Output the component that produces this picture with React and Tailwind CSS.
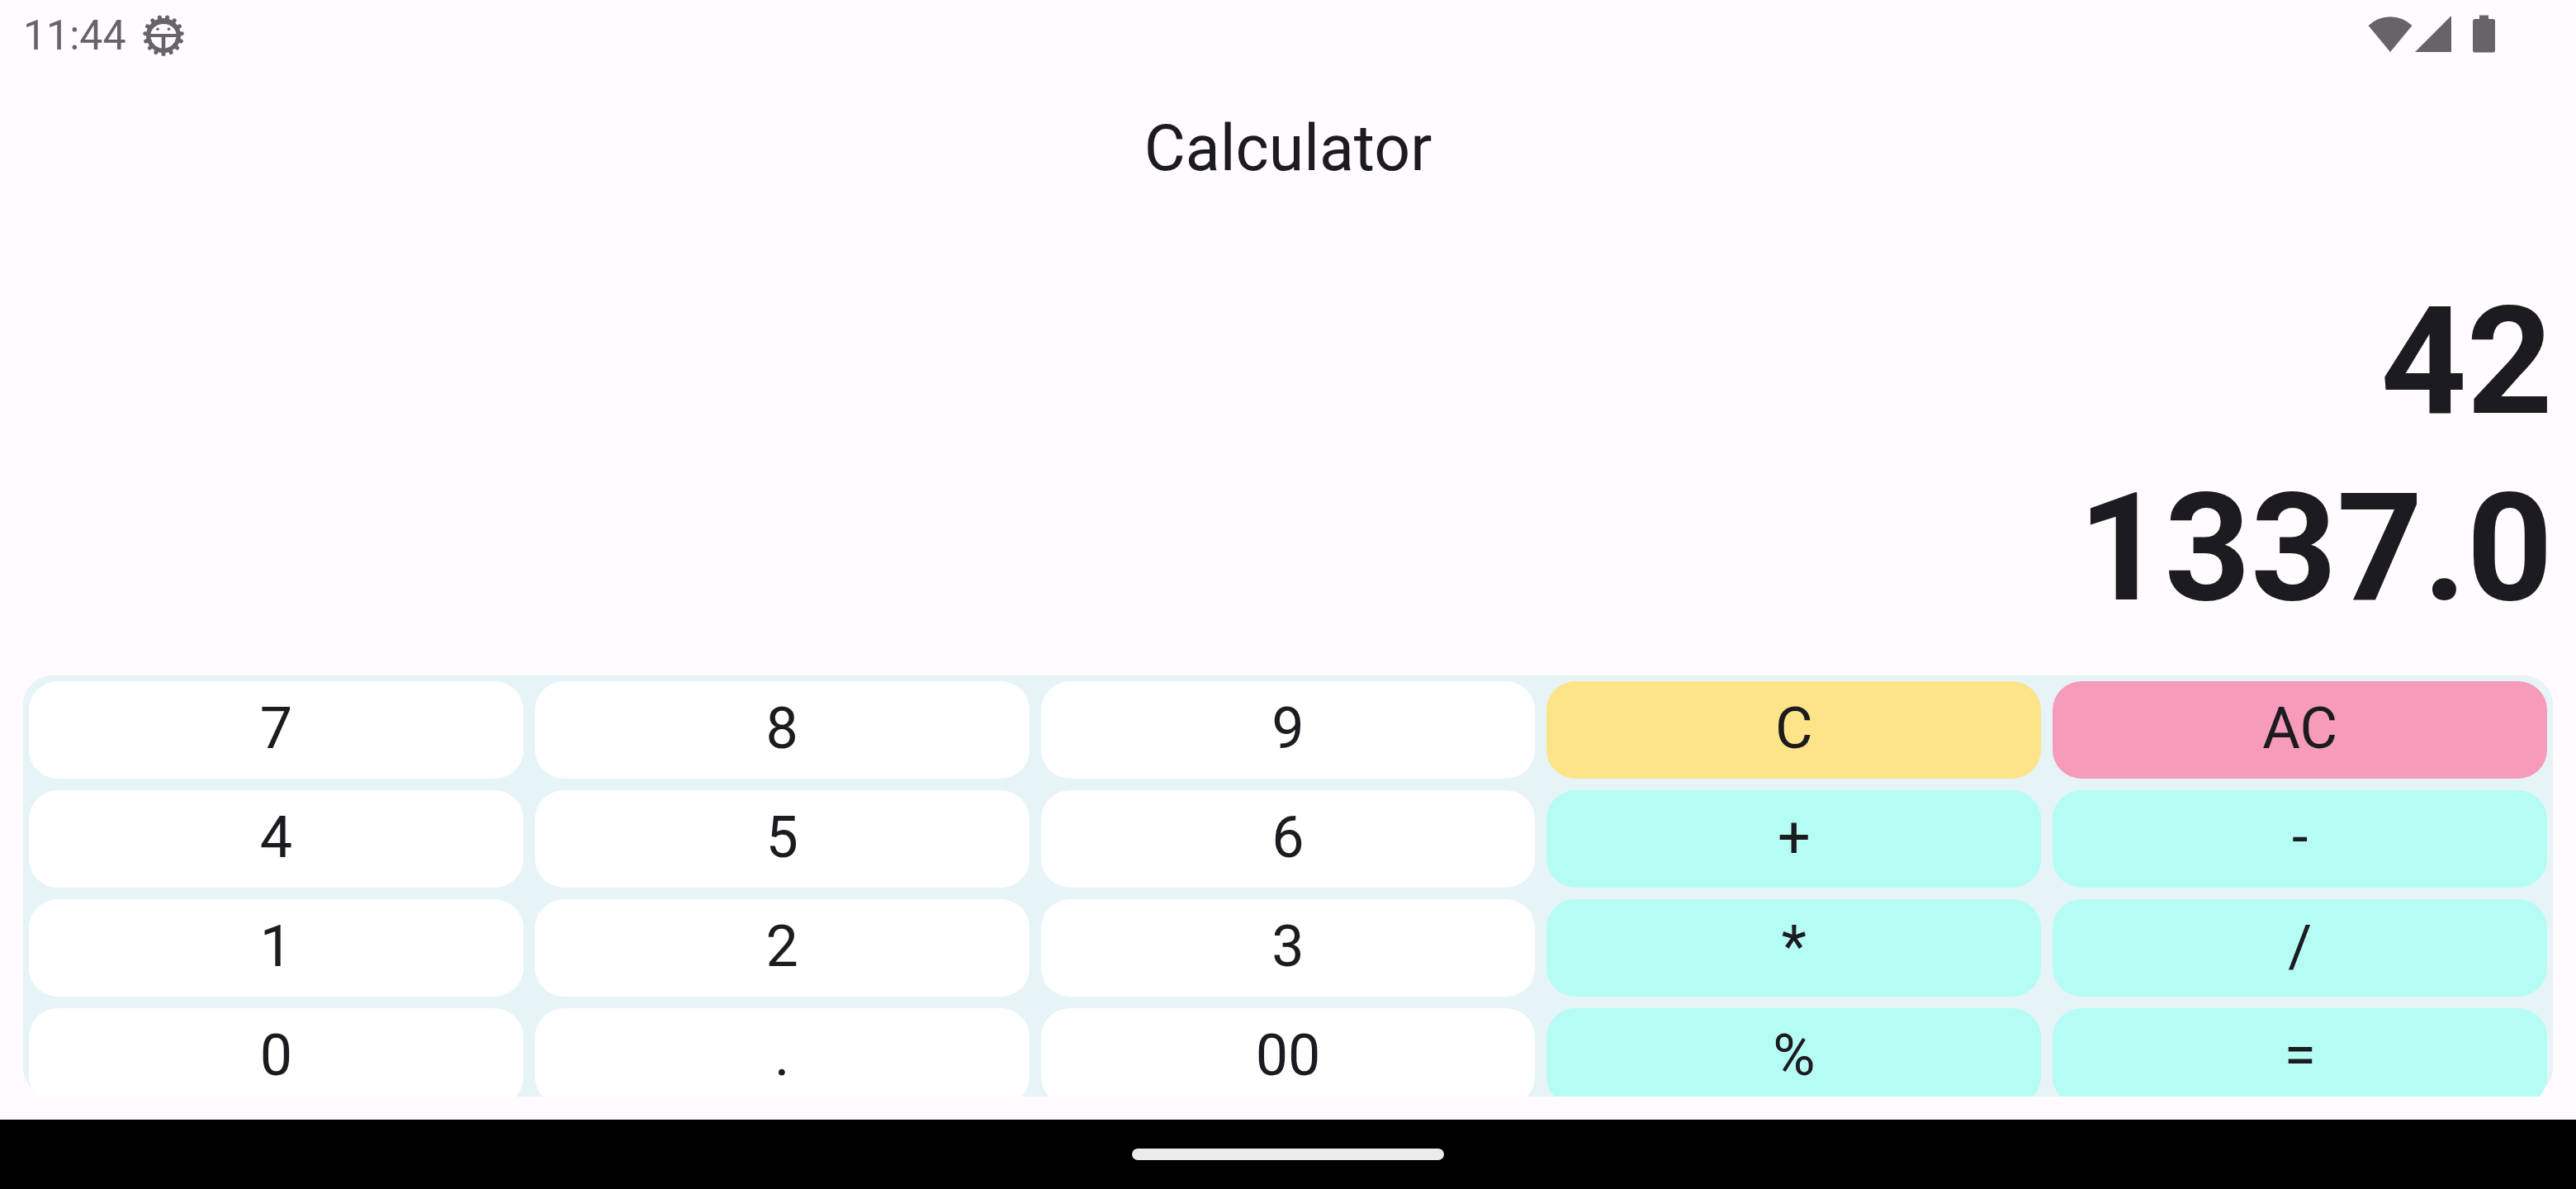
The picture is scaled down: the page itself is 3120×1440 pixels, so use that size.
const KEYS = [
  ["7", "8", "9", "C", "AC"],
  ["4", "5", "6", "+", "-"],
  ["1", "2", "3", "*", "/"],
  ["0", ".", "00", "%", "="],
];

function keyColor(label) {
  if (label === "C") return "bg-[#fde488]";
  if (label === "AC") return "bg-[#f69bba]";
  if (/^[0-9.]+$/.test(label)) return "bg-white";
  return "bg-[#b5fcf4]";
}

const TEETH = Array.from({ length: 15 }, (_, i) => Math.PI / 2 + (i * 2 * Math.PI) / 15);

function DebugIcon() {
  return (
    <svg viewBox="0 0 50 50" className="size-[50px]" fill="currentColor" aria-hidden="true">
      <path
        fillRule="evenodd"
        d="M25 4a21 21 0 1 0 0 42a21 21 0 1 0 0-42zM9.500 23a15.600 13.500 0 0 1 31 0zM9.500 27H22.700V40.500A15.600 15.600 0 0 1 9.500 27zM27.300 27H40.500A15.600 15.600 0 0 1 27.300 40.500z"
      />
      {TEETH.map((a) => (
        <line
          key={a}
          x1={25 + 18 * Math.cos(a)}
          y1={25 + 18 * Math.sin(a)}
          x2={25 + 22.4 * Math.cos(a)}
          y2={25 + 22.4 * Math.sin(a)}
          stroke="currentColor"
          strokeWidth="5"
          strokeLinecap="round"
        />
      ))}
      <circle cx="18" cy="17.300" r="1.800" />
      <circle cx="31.500" cy="17.300" r="1.800" />
    </svg>
  );
}

function StatusBar() {
  return (
    <div className="flex h-[86px] items-center justify-between pl-7 pr-[97px] text-[#666466]">
      <div className="flex items-center gap-5">
        <span className="text-[50px] leading-[58px]">11:44</span>
        <DebugIcon />
      </div>
      <div className="flex items-center pb-1">
        <svg viewBox="0 0 54 46" className="h-[46px] w-[54px]" fill="currentColor" aria-hidden="true">
          <path d="M27 45L.5 13A38 38 0 0 1 53.500 13z" />
        </svg>
        <svg viewBox="0 0 46 46" className="ml-[3px] h-[46px] w-[46px]" fill="currentColor" aria-hidden="true">
          <path d="M0 45L44 1V45z" />
        </svg>
        <svg viewBox="0 0 28 46" className="ml-6 h-[46px] w-7" fill="currentColor" aria-hidden="true">
          <path d="M8 0.500H19V5H24.500A2.500 2.500 0 0 1 27 7.500V43A2.500 2.500 0 0 1 24.500 45.500H2.500A2.500 2.500 0 0 1 0 43V7.500A2.500 2.500 0 0 1 2.500 5H8z" />
        </svg>
      </div>
    </div>
  );
}

export default function App() {
  return (
    <div className="flex min-h-screen flex-col bg-[#fffbff] font-[Roboto,sans-serif] text-[#1c1b1f]">
      <StatusBar />
      <header className="flex h-[188px] items-center justify-center">
        <h1 className="text-[77px] leading-[98px]">Calculator</h1>
      </header>
      <main className="flex flex-1 flex-col px-7 pb-7">
        <output className="flex flex-1 flex-col justify-end pb-[41px] text-right text-[182px] font-bold leading-[226px]">
          <span>42</span>
          <span>1337.0</span>
        </output>
        <div className="h-[510px] overflow-hidden">
          <div className="h-full rounded-[35px] bg-[#e6f4f8]">
            <div className="grid grid-cols-5 gap-[14px] p-[7px]">
              {KEYS.flat().map((label) => (
                <button
                  key={label}
                  type="button"
                  className={`h-[118px] rounded-[35px] pb-1 text-[70px] leading-[84px] ${keyColor(label)}`}
                >
                  {label}
                </button>
              ))}
            </div>
          </div>
        </div>
      </main>
      <div className="flex h-[84px] items-center justify-center bg-black">
        <div className="h-[14px] w-[378px] rounded-full bg-[#ebebeb]" />
      </div>
    </div>
  );
}
